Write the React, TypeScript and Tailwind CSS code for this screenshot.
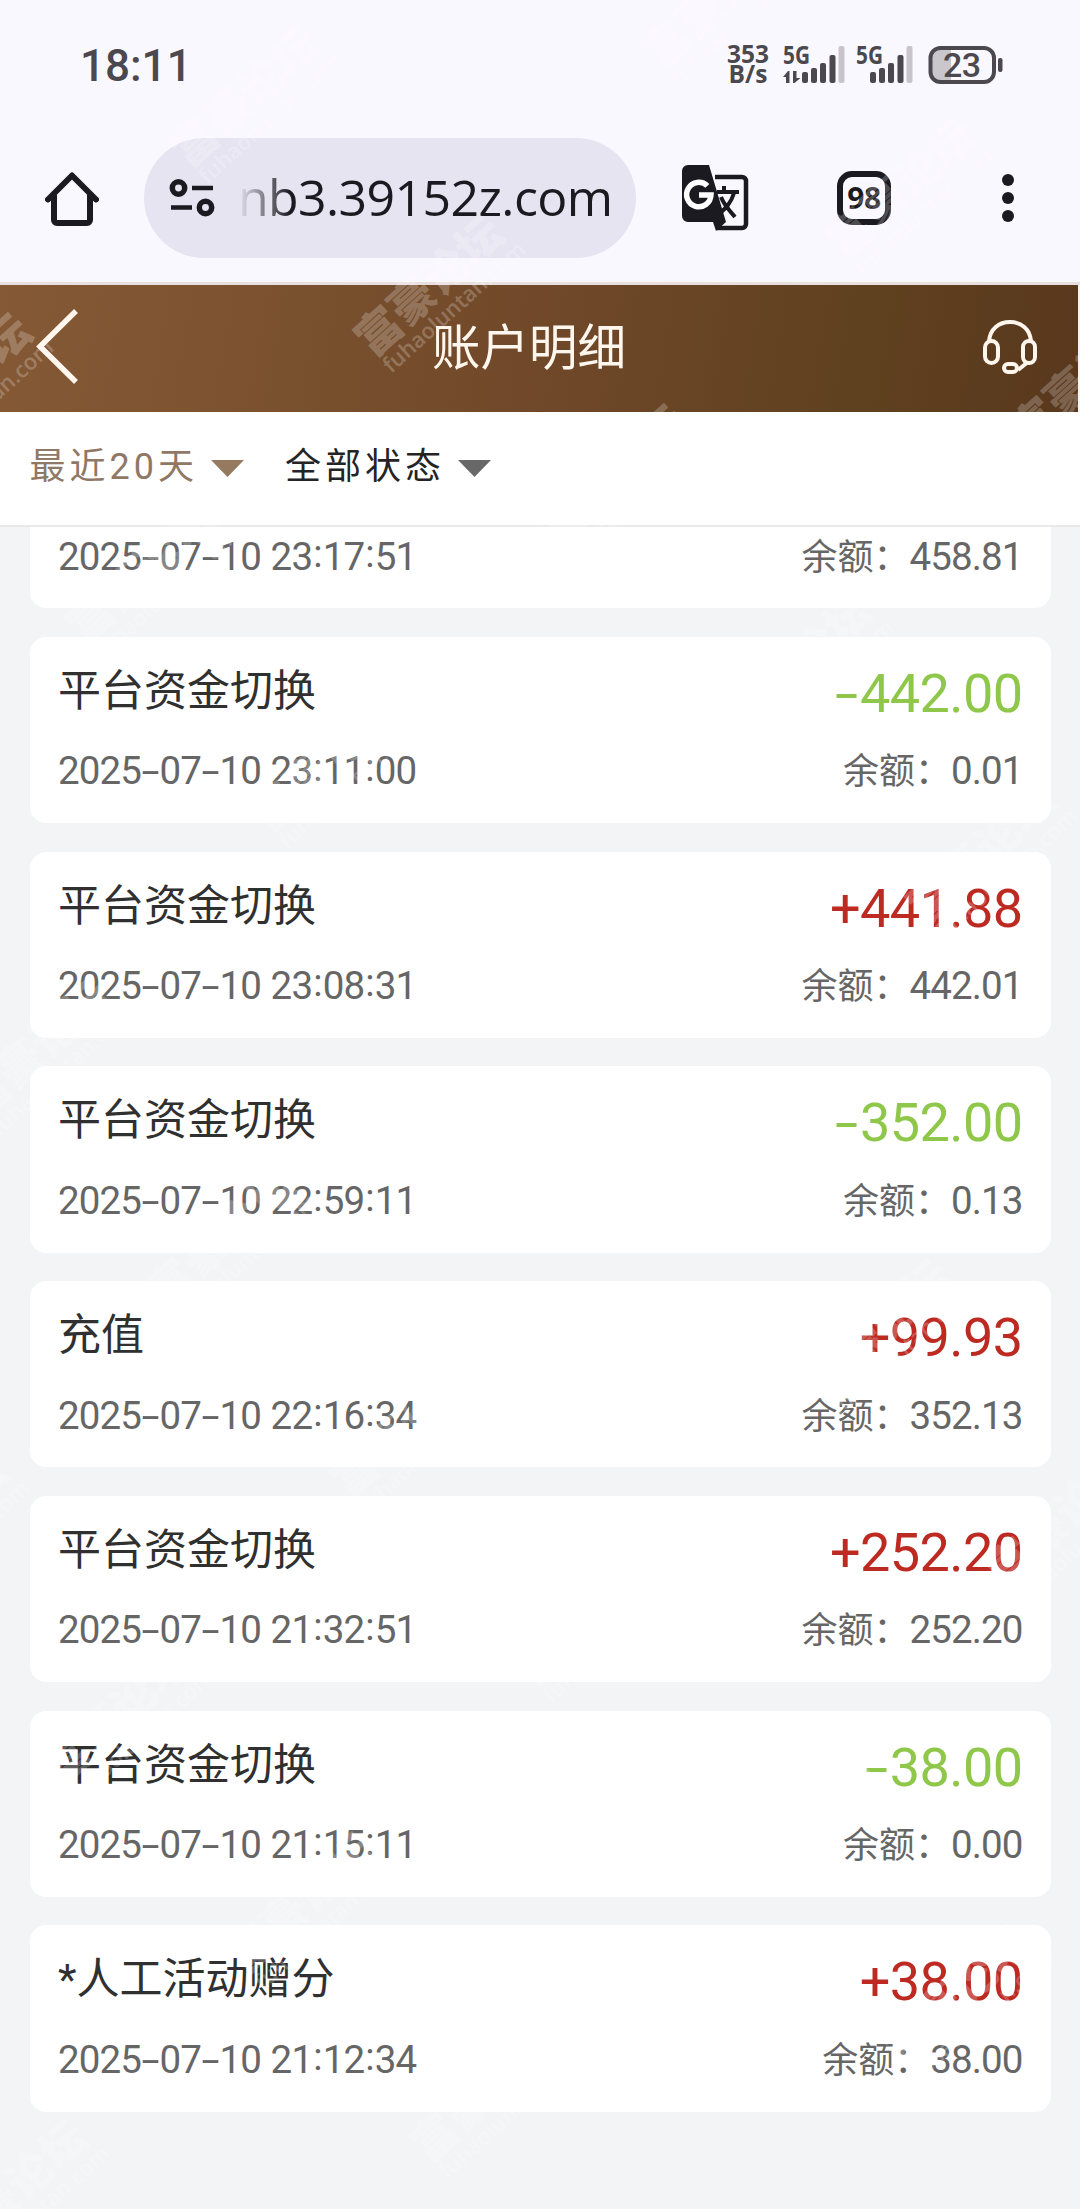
import { Fragment } from "react";

type Entry = {
  title: string;
  time: string;
  amount: string;
  balance: string;
};

const entries: Entry[] = [
  { title: "平台资金切换", time: "2025-07-10 23:17:51", amount: "+458.80", balance: "458.81" },
  { title: "平台资金切换", time: "2025-07-10 23:11:00", amount: "-442.00", balance: "0.01" },
  { title: "平台资金切换", time: "2025-07-10 23:08:31", amount: "+441.88", balance: "442.01" },
  { title: "平台资金切换", time: "2025-07-10 22:59:11", amount: "-352.00", balance: "0.13" },
  { title: "充值", time: "2025-07-10 22:16:34", amount: "+99.93", balance: "352.13" },
  { title: "平台资金切换", time: "2025-07-10 21:32:51", amount: "+252.20", balance: "252.20" },
  { title: "平台资金切换", time: "2025-07-10 21:15:11", amount: "-38.00", balance: "0.00" },
  { title: "*人工活动赠分", time: "2025-07-10 21:12:34", amount: "+38.00", balance: "38.00" },
];

// diagonal grid of repeated site marks
const marks: { x: number; y: number }[] = [];
for (let a = -3; a < 13; a++) {
  for (let b = -5; b < 4; b++) {
    const x = 378 + a * 184 + b * 472;
    const y = 328 + a * 189 - b * 98;
    if (x > -150 && x < 1100 && y > 0 && y < 2340) marks.push({ x, y });
  }
}

function Signal({ data }: { data?: boolean }) {
  return (
    <svg
      className="overflow-visible"
      width={data ? 63 : 58}
      height="40"
      viewBox={data ? "0 0 63 40" : "0 0 58 40"}
      fill="#4b494e"
    >
      <text
        x="0"
        y="20"
        textLength="27"
        lengthAdjust="spacingAndGlyphs"
        fontFamily="Open Sans"
        fontWeight="700"
        fontSize="25"
      >
        5G
      </text>
      {data && (
        <>
          <path d="M6.500 39V27H5l-5 6h3v6z" />
          <path d="M10 27v12h1.500l6-5h-4v-7z" />
        </>
      )}
      <g transform={data ? undefined : "translate(-5 0)"}>
        <rect x="19" y="28" width="6" height="11" rx="2" />
        <rect x="28" y="24" width="6" height="15" rx="2" />
        <rect x="37" y="19" width="6" height="20" rx="2" />
        <rect x="46.500" y="11" width="6" height="28" rx="2" />
        <rect x="55.500" y="2" width="6" height="37" rx="2" fill="#c9c4cb" />
      </g>
    </svg>
  );
}

function StatusBar() {
  return (
    <div className="flex h-[130px] items-start pl-[80px] pr-[76px] pt-[44px] font-['Open_Sans',sans-serif] text-[#4b494e]">
      <span className="pt-[1px] font-['Roboto',sans-serif] text-[44px] font-medium leading-[43px]">18:11</span>
      <div className="ml-auto flex items-start">
        <div className="mr-[13px] w-[44px] text-center text-[24.500px] font-bold leading-[20px]">
          <div>353</div>
          <div>B/s</div>
        </div>
        <Signal data />
        <div className="w-[10px]" />
        <Signal />
        <svg className="ml-[13px] overflow-visible" width="77" height="42" viewBox="0 0 77 42">
          <path d="M13 4h11v34H13a9 9 0 0 1-9-9V13a9 9 0 0 1 9-9z" fill="#c9c6cc" />
          <rect x="3.500" y="4" width="63.500" height="34" rx="10" fill="none" stroke="#4b494e" strokeWidth="4" />
          <rect x="71" y="14" width="4.500" height="14" rx="2" fill="#4b494e" />
          <text
            x="16"
            y="33"
            textLength="38"
            fontFamily="Roboto"
            fontWeight="500"
            fontSize="34"
            fill="#4b494e"
          >
            23
          </text>
        </svg>
      </div>
    </div>
  );
}

function BrowserBar() {
  return (
    <div className="flex h-[152px] items-start pl-[45px] text-[#1b1a20]">
      <svg className="mt-[41px]" width="54" height="55" viewBox="0 0 54 55" fill="none" stroke="currentColor" strokeWidth="6">
        <path d="M3 28.500 27 4.500 51 28.500" strokeLinecap="round" strokeLinejoin="round" />
        <path d="M9 24v25a3 3 0 0 0 3 3h30a3 3 0 0 0 3-3V24" />
      </svg>

      <div className="ml-[45px] mt-[8px] flex h-[120px] w-[492px] items-center rounded-full bg-[#e6e4f1] pl-[25px]">
        <svg width="46" height="40" viewBox="0 0 46 40" fill="none" stroke="currentColor" strokeWidth="5.500">
          <circle cx="9.500" cy="10" r="6.200" />
          <path d="M23 10h21M2 29.500h21" strokeWidth="4.500" />
          <circle cx="36.500" cy="29.500" r="6.200" />
        </svg>
        <span className="-mt-[3px] ml-[23px] whitespace-nowrap bg-linear-to-r from-[#1b1a20]/0 from-0% to-[#1b1a20] to-[14%] bg-clip-text font-['Open_Sans',sans-serif] text-[50px] leading-[70px] tracking-[-0.600px] text-transparent">
          nb3.39152z.com
        </span>
      </div>

      <svg className="ml-[44.500px] mt-[35px]" width="68" height="67" viewBox="0 0 68 67">
        <path d="M34 12h27a4 4 0 0 1 4 4v43a4 4 0 0 1-4 4H36" fill="none" stroke="#1b1a20" strokeWidth="4.500" />
        <path d="M7 0h21l17 57-10 9-3-9H7a6 6 0 0 1-6-6V6a6 6 0 0 1 6-6z" fill="#1b1a20" />
        <path d="M36 27h22M43 21v6M53 28c-3 10-8 15-15 21M40 32c3 8 9 14 14 20" fill="none" stroke="#1b1a20" strokeWidth="4" />
        <path d="M26.400 20.900A12.200 12.200 0 1 0 30 30H18" fill="none" stroke="#fff" strokeWidth="5.500" />
      </svg>

      <div className="ml-[88.500px] mt-[41px] flex h-[54px] w-[54px] items-center justify-center rounded-[15px] border-[6px] border-[#1b1a20] font-['Open_Sans',sans-serif] text-[30px] font-bold leading-none tracking-[-0.5px]">
        98
      </div>

      <div className="ml-[111px] mt-[44px] flex flex-col gap-[6px]">
        <i className="h-[12px] w-[12px] rounded-full bg-[#1b1a20]" />
        <i className="h-[12px] w-[12px] rounded-full bg-[#1b1a20]" />
        <i className="h-[12px] w-[12px] rounded-full bg-[#1b1a20]" />
      </div>
    </div>
  );
}

function PageHeader() {
  return (
    <header className="mr-[2px] flex h-[127px] items-center bg-linear-[100deg,#855936_0%,#79502e_30%,#6f4829_52%,#60411f_78%,#59381d_100%] pl-[35px] pr-[40px] text-[#fff7ee]">
      <svg className="-mt-[3px]" width="44" height="76" viewBox="0 0 44 76" fill="none" stroke="currentColor" strokeWidth="5.500">
        <path d="M41 2 5 37.500 41 73" />
      </svg>
      <h1 className="ml-[353px] text-[48.500px] leading-[60px]">账户明细</h1>
      <svg className="-mt-[4px] ml-auto" width="56" height="56" viewBox="0 0 56 56" fill="none" stroke="currentColor" strokeWidth="4">
        <path d="M7 22C8 10 17 3 28 3s20 7 21 19" />
        <rect x="3" y="22" width="13" height="22" rx="6.500" />
        <rect x="41" y="22" width="12" height="22" rx="6" />
        <path d="M46 43 36 51" />
        <rect x="22" y="45" width="13" height="8" rx="4" />
      </svg>
    </header>
  );
}

function Caret({ className }: { className: string }) {
  return (
    <svg className={className} width="33" height="17" viewBox="0 0 33 17" fill="currentColor">
      <path d="M0 0h33L16.500 17z" />
    </svg>
  );
}

function Filters() {
  return (
    <div className="flex h-[115px] items-center border-b-2 border-[#e9e9ea] bg-white pb-[4px] pl-[29.500px] text-[36px] tracking-[4px]">
      <span className="text-[#8f7866]">最近20天</span>
      <Caret className="ml-[13px] mt-[3px] text-[#967a60]" />
      <span className="ml-[41px] text-[#242424]">全部状态</span>
      <Caret className="ml-[13px] mt-[3px] text-[#686868]" />
    </div>
  );
}

function Stamp({ value }: { value: string }) {
  return (
    <span className="[word-spacing:0.8px]">
      {value.split("").map((c, i) =>
        c === "-" ? (
          <span key={i} className="inline-block w-[18.500px] text-center">
            <span className="inline-block scale-x-[1.700]">-</span>
          </span>
        ) : c === ":" ? (
          <span key={i} className="relative -top-[3px] inline-block w-[10.500px] text-center">
            :
          </span>
        ) : (
          <Fragment key={i}>{c}</Fragment>
        ),
      )}
    </span>
  );
}

function Card({ entry }: { entry: Entry }) {
  const minus = entry.amount.startsWith("-");
  return (
    <div className="h-[186.200px] shrink-0 rounded-[16px] bg-white pl-[28.500px] pr-[28px] pt-[22px]">
      <div className="flex h-[62px] justify-between">
        <span className="pt-[2px] text-[43px] leading-[60px] text-[#303030]">{entry.title}</span>
        <span
          className={
            minus
              ? "text-[54px] leading-[70px] tracking-[-0.600px] text-[#8fc74a]"
              : "text-[54px] leading-[70px] tracking-[-0.600px] text-[#bd2a22]"
          }
        >
          {minus ? <span className="mr-[3px] inline-block origin-right scale-x-[1.550]">-</span> : "+"}
          {entry.amount.slice(1)}
        </span>
      </div>
      <div className="mt-[25.500px] flex justify-between text-[38.500px] leading-[50px] tracking-[-0.880px] text-[#666]">
        <Stamp value={entry.time} />
        <span>
          <span className="text-[36px] tracking-normal">余额：</span>
          {entry.balance}
        </span>
      </div>
    </div>
  );
}

export default function App() {
  return (
    <div className="relative flex h-[2209px] w-[1080px] flex-col overflow-hidden bg-[#f3f4f6] font-['Roboto','Noto_Sans_CJK_SC',sans-serif]">
      <div className="border-b-[3px] border-[#eadfdf] bg-[#faf8ff]">
        <StatusBar />
        <BrowserBar />
      </div>
      <PageHeader />
      <Filters />
      <main className="flex min-h-0 flex-1 flex-col overflow-hidden px-[29.500px]">
        <div className="-mt-[105px] flex flex-col gap-[28.600px]">
          {entries.map((entry) => (
            <Card key={entry.time} entry={entry} />
          ))}
        </div>
      </main>

      <div className="pointer-events-none absolute inset-0 overflow-hidden text-white/24" aria-hidden="true">
        {marks.map((m) => (
          <div
            key={`${m.x},${m.y}`}
            className="absolute h-0 w-0 -rotate-[42deg] whitespace-nowrap font-['Noto_Sans_CJK_SC',sans-serif] font-black"
            style={{ left: m.x, top: m.y }}
          >
            <div className="-ml-[24px] -mt-[26px] text-[45px] leading-[52px]">富豪论坛</div>
            <div className="-ml-[21px] -mt-[3px] font-['Open_Sans',sans-serif] text-[22px] font-semibold leading-[22px]">
              fuhaoluntan.com
            </div>
          </div>
        ))}
      </div>
    </div>
  );
}
